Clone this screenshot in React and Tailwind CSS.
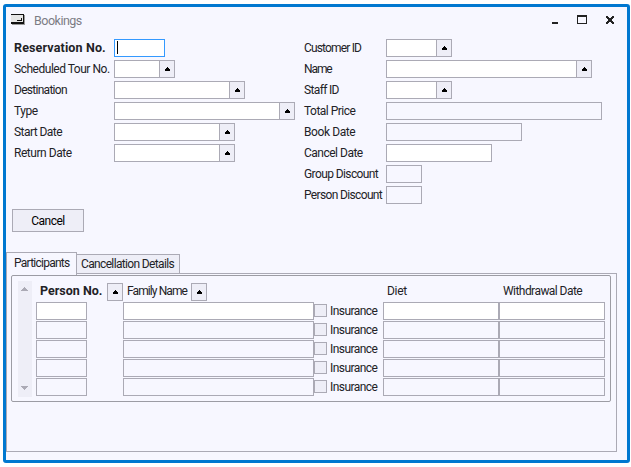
const FONT = 'font-["Roboto","Liberation_Sans",sans-serif]';

function Arrow() {
  return (
    <svg width="5" height="4" viewBox="0 0 5 4" shapeRendering="crispEdges" fill="#000">
      <path d="M2 0h1v1H2zM1 1h3v1H1zM0 2h5v2H0z" />
    </svg>
  );
}

function LookupButton({ className = '' }) {
  return (
    <button className={`flex h-[18px] w-4 shrink-0 items-center justify-center border border-[#abaab5] bg-[#eeeef7] pl-px ${className}`}>
      <Arrow />
    </button>
  );
}

function Box({ width, filled }) {
  return <div className={`h-[18px] shrink-0 border border-[#abaab5] ${width} ${filled ? 'bg-white' : ''}`} />;
}

function Text({ children, className = '' }) {
  return <span className={`block whitespace-nowrap leading-[18px] ${className}`}>{children}</span>;
}

const leftFields = [
  ['Scheduled Tour No.', 'w-[46px]', 'tracking-[-0.48px]'],
  ['Destination', 'w-[116px]', 'tracking-[-0.72px]'],
  ['Type', 'w-[166px]', 'tracking-[-0.5px]'],
  ['Start Date', 'w-[106px]', 'tracking-[-0.55px]'],
  ['Return Date', 'w-[106px]', 'tracking-[-0.45px]'],
];

const rightFields = [
  ['Customer ID', 'w-[51px]', true, true, 'tracking-[-0.84px]'],
  ['Name', 'w-[191px]', true, true, 'tracking-[-1.1px]'],
  ['Staff ID', 'w-[51px]', true, true, 'tracking-[-0.65px]'],
  ['Total Price', 'w-[216px]', false, false, 'tracking-[-0.52px]'],
  ['Book Date', 'w-[136px]', false, false, 'tracking-[-0.4px]'],
  ['Cancel Date', 'w-[106px]', true, false, 'tracking-[-0.5px]'],
  ['Group Discount', 'w-[36px]', false, false, 'tracking-[-0.6px]'],
  ['Person Discount', 'w-[36px]', false, false, 'tracking-[-0.65px]'],
];

function TitleBar() {
  return (
    <header className="flex h-8 shrink-0 items-start pl-[5px] pr-[13px] pt-[7px]">
      <svg width="14" height="11" viewBox="0 0 14 11" shapeRendering="crispEdges" className="shrink-0">
        <path d="M0 1h12v8H0z" fill="#e6e6e6" />
        <path d="M0 0h13v1H0z" fill="#111" />
        <path d="M0 8h13v2H0zM12 0h1v10h-1zM10 4h1v3h-1zM6 6h5v1H6z" fill="#111" />
        <path d="M13 1h1v10H1v-1h12z" fill="#999" />
      </svg>
      <Text className="ml-[9px] mt-[-2px] text-[12.5px] tracking-[-0.5px] text-[#7c7c84]">Bookings</Text>
      <svg width="62" height="12" viewBox="0 0 62 12" shapeRendering="crispEdges" className="ml-auto mt-px shrink-0" fill="#222">
        <path d="M0 7h6v2H0z" />
        <path fillRule="evenodd" d="M25 0h10v9H25zM26 2v6h8V2z" />
        <path d="M54 1h2v1h-2zM60 1h2v1h-2zM54 2h3v1h-3zM59 2h3v1h-3zM55 3h6v1h-6zM56 4h4v2h-4zM55 6h6v1h-6zM54 7h3v1h-3zM59 7h3v1h-3zM54 8h2v1h-2zM60 8h2v1h-2z" />
      </svg>
    </header>
  );
}

export default function App() {
  return (
    <div className={`h-[467px] w-[631px] bg-white pl-[3px] pt-1 text-[12px] text-[#222226] ${FONT}`}>
      <div className="flex h-[459px] w-[627px] flex-col rounded-[3px] border-[3px] border-[#0078d0] bg-[#f7f7ff]">
        <TitleBar />
        <section className="flex h-[170px] shrink-0">
          <div className="flex w-[298px] flex-col gap-[3px] pl-2">
            <div className="flex">
              <Text className="w-[100px] text-[12.5px] font-bold tracking-[0.14px]">Reservation No.</Text>
              <div className="flex h-[18px] w-[51px] border border-[#3399ff] bg-white pl-0.5 pt-px">
                <div className="h-[13px] w-px bg-black" />
              </div>
            </div>
            {leftFields.map(([label, width, tracking]) => (
              <div key={label} className="flex">
                <Text className={`w-[100px] shrink-0 ${tracking}`}>{label}</Text>
                <Box width={width} filled />
                <LookupButton className="-ml-px" />
              </div>
            ))}
          </div>
          <div className="flex flex-col gap-[3px]">
            {rightFields.map(([label, width, filled, lookup, tracking]) => (
              <div key={label} className="flex">
                <Text className={`w-[82px] shrink-0 ${tracking}`}>{label}</Text>
                <Box width={width} filled={filled} />
                {lookup && <LookupButton className="-ml-px" />}
              </div>
            ))}
          </div>
        </section>
        <button className="ml-1.5 flex h-[23px] w-[72px] shrink-0 items-center justify-center border border-[#abaab5] bg-[#eeeef7] text-black">
          <Text className="tracking-[-0.5px]">Cancel</Text>
        </button>
        <nav className="mt-5 flex h-[22px] shrink-0 items-end">
          <div className="z-10 -mb-px h-[23px] w-[71px] shrink-0 self-start border border-b-0 border-[#abaab5] bg-[#f7f7ff] pl-[7px] pt-px">
            <Text className="tracking-[-0.75px]">Participants</Text>
          </div>
          <div className="-ml-px h-5 w-[104px] border border-[#abaab5] bg-[#eeeef7] pl-1">
            <Text className="tracking-[-0.65px]">Cancellation Details</Text>
          </div>
        </nav>
        <section className="-mt-px h-[179px] w-[611px] shrink-0 border border-[#abaab5] pl-1 pt-px">
          <div className="flex h-[127px] w-[600px] rounded-[2px] border border-[#9c9ca4] pl-1.5 pt-[5px]">
            <div className="flex h-[116px] w-3.5 flex-col items-center justify-between bg-[#eeeef7] pb-[7px] pt-1.5">
              <svg width="8" height="4" viewBox="0 0 8 4" shapeRendering="crispEdges" fill="#abaab5">
                <path d="M3 0h1v1h1v1h1v1h1v1H0V3h1V2h1V1h1z" />
              </svg>
              <svg width="8" height="4" viewBox="0 0 8 4" shapeRendering="crispEdges" fill="#abaab5">
                <path d="M0 0h7v1H6v1H5v1H4v1H3V3H2V2H1V1H0z" />
              </svg>
            </div>
            <div className="ml-1 flex flex-col gap-px pt-0.5">
              <div className="flex h-[18px] pl-1">
                <Text className="-mt-px w-[67px] shrink-0 text-[12.5px] font-bold">Person No.</Text>
                <LookupButton />
                <Text className="-mt-px ml-1 w-16 shrink-0 tracking-[-0.9px]">Family Name</Text>
                <LookupButton />
                <Text className="-mt-px ml-[180px] w-[116px] shrink-0 tracking-[-0.3px]">Diet</Text>
                <Text className="-mt-px tracking-[-0.55px]">Withdrawal Date</Text>
              </div>
              {[true, false, false, false, false].map((filled, row) => (
                <div key={row} className="flex">
                  <Box width="w-[51px]" filled={filled} />
                  <div className="w-9 shrink-0" />
                  <Box width="w-[191px]" filled={filled} />
                  <div className="mt-0.5 h-[13px] w-[13px] shrink-0 border border-[#abaab5] bg-[#eeeef7]" />
                  <Text className="w-[56px] shrink-0 pl-[3px] tracking-[-0.55px]">Insurance</Text>
                  <Box width="w-[116px]" filled={filled} />
                  <Box width="w-[106px]" filled={filled} />
                </div>
              ))}
            </div>
          </div>
        </section>
      </div>
    </div>
  );
}
